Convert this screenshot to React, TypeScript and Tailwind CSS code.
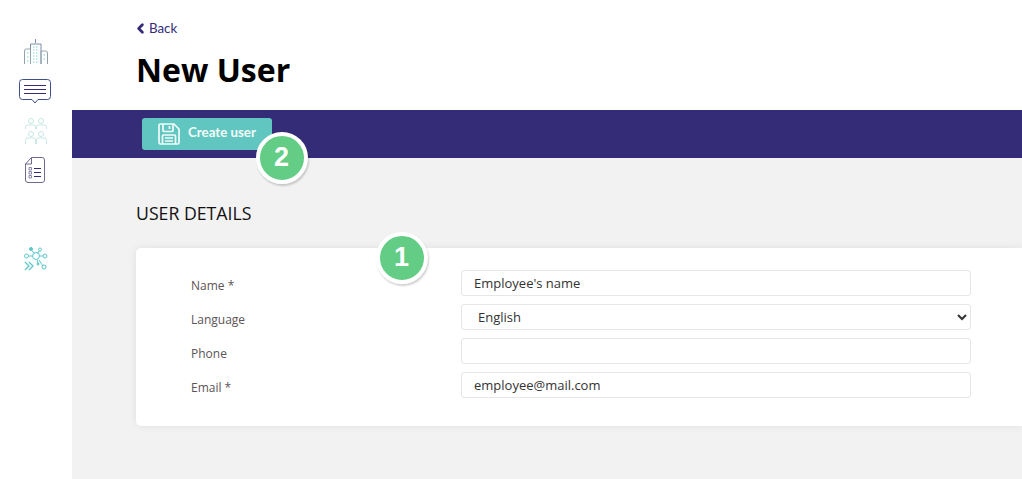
import { ChevronLeft } from 'lucide-react'

function BuildingIcon() {
  return (
    <svg width="26" height="26" viewBox="0 0 26 26" fill="none" strokeWidth="1">
      <path d="M12.500 0v4M7.500 25V5h10.500v20" stroke="#7f8fa8" />
      <path d="M7.500 25V10H3.500Q1.500 10 1.500 12V25M18 25V12h4.500q2 0 2 2V25" stroke="#8fa3ad" />
      <path d="M10 8h1.500M13 8h1.500M10 11h1.500M13 11h1.500M10 14h1.500M13 14h1.500M10 17h1.500M13 17h1.500M10 20h1.500M13 20h1.500M10 23h1.500M13 23h1.500" stroke="#7fd0cc" />
      <path d="M4 14h1.500M4 18h1.500M4 22h1.500M20.500 16h1.500M20.500 20h1.500" stroke="#7fd0cc" />
    </svg>
  )
}

function ChatIcon() {
  return (
    <svg width="32" height="26" viewBox="0 0 32 26" fill="none">
      <path d="M3.500 .5h25q3 0 3 3v14q0 3-3 3H19l-3 3.500-3-3.500H3.500q-3 0-3-3v-14q0-3 3-3z" stroke="#3f4f8a" />
      <path d="M5 6.500h22M5 10.500h22M5 14.500h22" stroke="#352c78" strokeWidth="1" />
    </svg>
  )
}

function PeopleIcon() {
  return (
    <svg width="22" height="28" viewBox="0 0 22 28" fill="none" stroke="#c9e8e6">
      <circle cx="6" cy="4" r="2.500" />
      <circle cx="16" cy="4" r="2.500" />
      <path d="M.5 12V10q0-2 2-2h6q2 0 2 2v2M11.500 12V10q0-2 2-2h6q2 0 2 2v2" />
      <circle cx="6" cy="17" r="2.500" />
      <circle cx="16" cy="17" r="2.500" />
      <path d="M.5 27V23q0-2 2-2h6q2 0 2 2v4M11.500 27V23q0-2 2-2h6q2 0 2 2v4" />
    </svg>
  )
}

function ChecklistIcon() {
  return (
    <svg width="20" height="26" viewBox="0 0 20 26" fill="none">
      <path d="M6.500 .5h10.500q2.500 0 2.500 2.500v20q0 2.500-2.500 2.500H3q-2.500 0-2.500-2.500V7z" stroke="#6f6a8f" />
      <path d="M6.500 .5V7H.5" stroke="#6f6a8f" />
      <path d="M9 11.500h7M9 15.500h7M9 19.500h7" stroke="#352c78" />
      <path d="M4 10.500h2.500v2.500H4zM4 14.500h2.500v2.500H4zM4 18.500h2.500v2.500H4z" stroke="#8f86ad" />
    </svg>
  )
}

function NetworkIcon() {
  return (
    <svg width="24" height="24" viewBox="0 0 24 24" fill="none" stroke="#5cc8ca">
      <circle cx="12" cy="9" r="3.500" />
      <circle cx="7" cy="2" r="1.500" fill="#5cc8ca" />
      <circle cx="16" cy="2.500" r="1.500" />
      <circle cx="2.500" cy="9" r="2" />
      <circle cx="21" cy="9" r="2" />
      <circle cx="20" cy="20" r="2" />
      <circle cx="14" cy="17" r="1" fill="#5cc8ca" />
      <path d="M8 3.500l2 3M15 4l-1.500 2.500M4.500 9h4M15.500 9H19M13 12.500l1 3.500M15 13l3.500 5.500" />
      <path d="M1 15l4 4-4 4M5 15l4 4-4 4" strokeWidth="1.300" />
    </svg>
  )
}

function SaveIcon() {
  return (
    <svg width="22" height="22" viewBox="0 0 22 22" fill="none" stroke="#f2fbfa" strokeWidth="1.700">
      <path d="M2.500 1h13.500l5 5v13.500q0 1.500-1.500 1.500H2.500Q1 21 1 19.500v-17Q1 1 2.500 1z" />
      <path d="M5 1v6.500q0 1 1 1h8q1 0 1-1V1M11.500 3v3" />
      <path d="M4.500 21v-8q0-1 1-1h11q1 0 1 1v8M7 15h8M7 18h8" />
    </svg>
  )
}

function Badge({ n, className }: { n: string; className: string }) {
  return (
    <div
      className={`absolute flex h-[52px] w-[52px] items-center justify-center rounded-full border-[4px] border-white bg-[#63cd85] pb-[1px] pr-[1px] text-[27px] font-bold text-white shadow-[1px_2px_2px_rgba(0,0,0,0.18)] ${className}`}
      style={{ fontFamily: '"Liberation Sans", Arial, sans-serif' }}
    >
      {n}
    </div>
  )
}

const fields = [
  { label: 'Name *', value: "Employee's name" },
  { label: 'Language', select: true },
  { label: 'Phone', value: '' },
  { label: 'Email *', value: 'employee@mail.com' },
]

export default function App() {
  return (
    <div
      className="relative flex h-[479px] w-[1022px] overflow-hidden bg-white"
      style={{ fontFamily: '"Open Sans", sans-serif' }}
    >
      <aside className="flex w-[72px] shrink-0 flex-col items-center pt-[39px]">
        <div className="flex h-[26px] items-center pr-[1px]"><BuildingIcon /></div>
        <div className="mt-[14px] flex h-[26px] items-center pr-[3px]"><ChatIcon /></div>
        <div className="mt-[12px] flex h-[28px] items-center pr-[1px]"><PeopleIcon /></div>
        <div className="mt-[12px] flex h-[26px] items-center pr-[2px]"><ChecklistIcon /></div>
        <div className="mt-[64px] flex h-[24px] items-center"><NetworkIcon /></div>
      </aside>

      <main className="flex min-w-0 flex-1 flex-col">
        <header className="h-[110px] pl-[64px] pt-[19px]">
          <a
            className="flex h-[18px] items-center text-[13.300px] text-[#352c78]"
            style={{ fontFamily: 'Lato, sans-serif' }}
          >
            <ChevronLeft size={15} strokeWidth={4.500} className="-ml-[3px] mr-[1px]" />
            <span className="mt-[2px]">Back</span>
          </a>
          <h1 className="mt-[10px] text-[32px] font-bold leading-[46px] text-black">New User</h1>
        </header>

        <div className="h-[48px] bg-[#352c78] pl-[70px] pt-[8px]">
          <button
            className="flex h-[32px] w-[130px] items-center rounded-[3px] bg-[#62c6c0] pl-[16px] text-[13.300px] font-bold text-[#f2fbfa]"
            style={{ fontFamily: 'Lato, sans-serif' }}
          >
            <SaveIcon />
            <span className="ml-[8px] -mt-[2px]">Create user</span>
          </button>
        </div>

        <section className="flex-1 bg-[#f2f2f2] pl-[64px] pt-[44px]">
          <h2 className="text-[17.700px] leading-[22px] text-[#111]">USER DETAILS</h2>
          <div className="mt-[24px] h-[178px] rounded-l-[5px] bg-white pl-[55px] pt-[22px] shadow-[0_0_8px_rgba(0,0,0,0.08)]">
            <div className="flex flex-col gap-[8px]">
              {fields.map(f => (
                <div key={f.label} className="flex h-[26px] items-center">
                  <label className="mt-[6px] w-[270px] text-[12px] text-[#5b5357]">{f.label}</label>
                  {f.select ? (
                    <select className="h-[26px] w-[510px] rounded-[3px] border border-[#e6e6e6] bg-white pl-[12px] pr-[1px] text-[13px] text-[#333]">
                      <option>English</option>
                    </select>
                  ) : (
                    <input
                      readOnly
                      value={f.value}
                      className="h-[26px] w-[510px] rounded-[3px] border border-[#e6e6e6] bg-white px-[12px] text-[13px] text-[#333] outline-none"
                    />
                  )}
                </div>
              ))}
            </div>
          </div>
        </section>
      </main>

      <Badge n="2" className="left-[256px] top-[132px]" />
      <Badge n="1" className="left-[376px] top-[232px]" />
    </div>
  )
}
